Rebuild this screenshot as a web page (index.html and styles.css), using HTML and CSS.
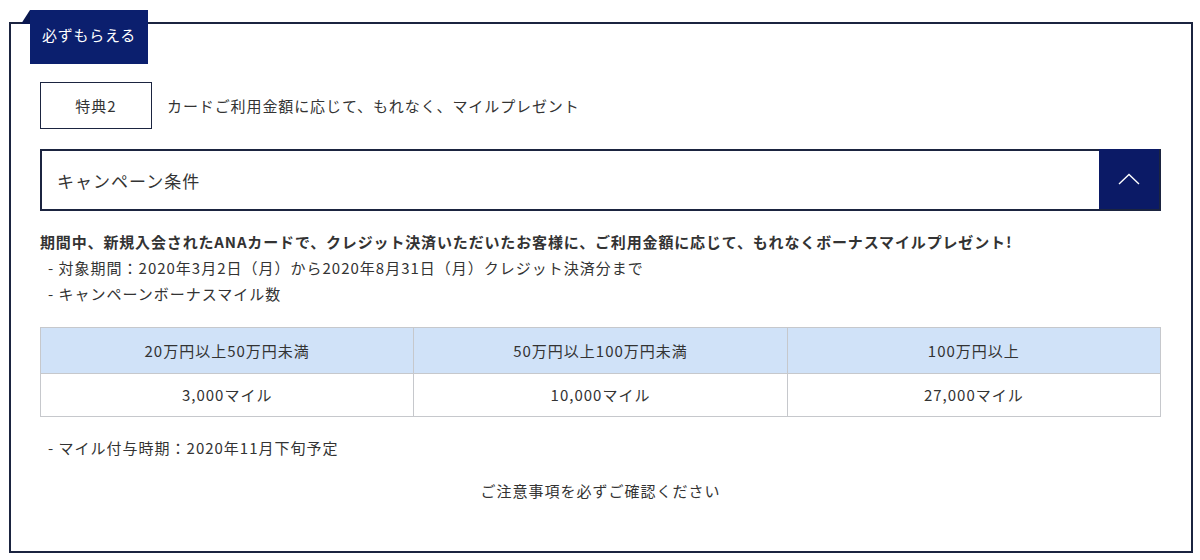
FILE: index.html
```html
<!DOCTYPE html>
<html lang="ja">
<head>
    <meta charset="UTF-8">
    <title>必ずもらえる</title>
    <link rel="stylesheet" href="styles.css">
</head>
<body>
    <div class="wrap">
        <div class="box">
            <div class="tab">必ずもらえる</div>
            <div class="perk">
                <div class="perk-label">特典2</div>
                <p class="perk-text">カードご利用金額に応じて、もれなく、マイルプレゼント</p>
            </div>
            <div class="acc-head">
                <span class="acc-title">キャンペーン条件</span>
                <span class="acc-btn">
                    <svg width="22" height="12" viewBox="0 0 22 12"><polyline points="1,11 11,1.5 21,11" fill="none" stroke="#fff" stroke-width="1.4"/></svg>
                </span>
            </div>
            <div class="acc-body">
                <p class="lead">期間中、新規入会されたANAカードで、クレジット決済いただいたお客様に、ご利用金額に応じて、もれなくボーナスマイルプレゼント!</p>
                <p class="item">- 対象期間：2020年3月2日（月）から2020年8月31日（月）クレジット決済分まで</p>
                <p class="item">- キャンペーンボーナスマイル数</p>
                <table class="miles">
                    <tr>
                        <th>20万円以上50万円未満</th>
                        <th>50万円以上100万円未満</th>
                        <th>100万円以上</th>
                    </tr>
                    <tr>
                        <td>3,000マイル</td>
                        <td>10,000マイル</td>
                        <td>27,000マイル</td>
                    </tr>
                </table>
                <p class="item">- マイル付与時期：2020年11月下旬予定</p>
                <p class="note">ご注意事項を必ずご確認ください</p>
            </div>
        </div>
    </div>
</body>
</html>
```

FILE: styles.css
```css
body { margin: 0; background: #fff; font-family: "Noto Sans CJK JP", "Liberation Sans", sans-serif; color: #333; letter-spacing: 1px; }
p { margin: 0; }
.wrap { padding: 22px 7px 0 9px; }
.box { position: relative; height: 531px; border: 2px solid #1b2440; padding: 0 30px 0 29px; box-sizing: border-box; }
.tab { position: absolute; top: -14px; left: 19px; width: 118px; height: 54px; background: #0b1f6e; color: #fff; font-size: 15px; letter-spacing: 0.7px; line-height: 50px; text-align: center; }
.tab::before { content: ""; position: absolute; left: -9px; top: 0; border-right: 9px solid #0a1850; border-top: 14px solid transparent; }
.perk { display: flex; align-items: center; margin-top: 58px; }
.perk-label { width: 110px; height: 45px; border: 1px solid #1b2440; font-size: 15px; display: flex; align-items: center; justify-content: center; }
.perk-text { margin-left: 15px; font-size: 15px; letter-spacing: 0.9px; }
.acc-head { display: flex; align-items: center; justify-content: space-between; height: 62px; margin-top: 20px; border: 2px solid #1b2440; box-sizing: border-box; }
.acc-title { padding-left: 15px; font-size: 17px; }
.acc-btn { width: 60px; height: 60px; margin-top: -2px; background: #0b1a66; display: flex; align-items: center; justify-content: center; }
.acc-body { padding-top: 18px; font-size: 15px; line-height: 26px; }
.lead { font-weight: bold; letter-spacing: 0.85px; }
.item { padding-left: 8px; }
.miles { width: 100%; border-collapse: collapse; margin: 20px 0 18px; table-layout: fixed; }
.miles th, .miles td { border: 1px solid #c6c8cc; text-align: center; font-size: 15px; font-weight: normal; line-height: 20px; padding: 0; }
.miles th { background: #d0e2f8; height: 45px; }
.miles td { height: 42px; }
.note { text-align: center; margin-top: 17px; }
```
